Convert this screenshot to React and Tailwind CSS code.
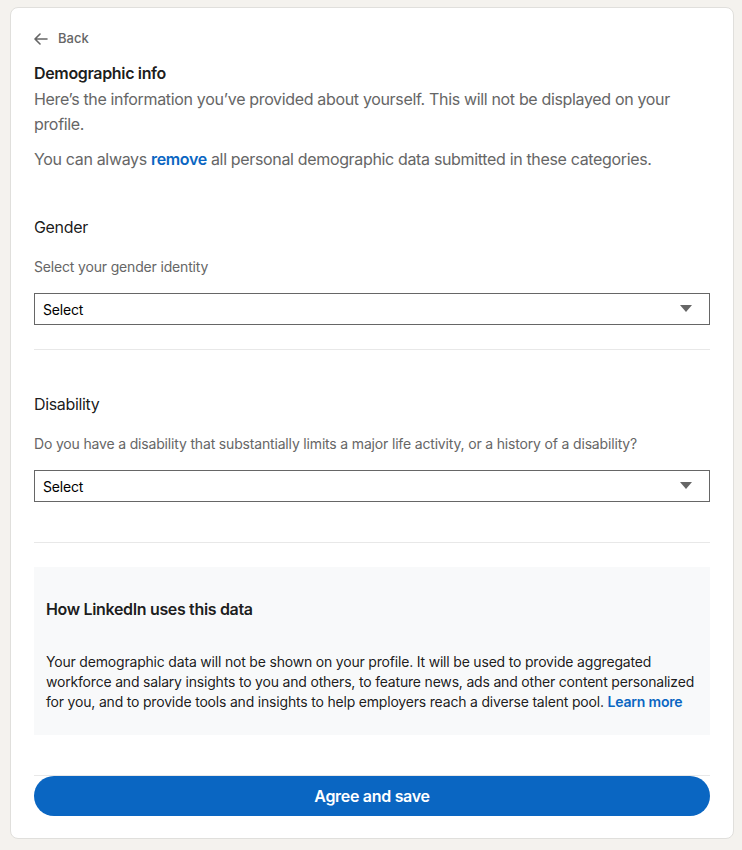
import React from "react";

const Caret = () => (
  <svg width="12" height="8" viewBox="0 0 12 8" className="shrink-0">
    <path d="M0 0 L12 0 L6 7 Z" fill="#666666" />
  </svg>
);

function SelectBox() {
  return (
    <div className="flex h-8 items-center justify-between border border-[#666666] pl-[8px] pr-[17px] text-[14px] tracking-[-0.17px] text-black">
      <span>Select</span>
      <Caret />
    </div>
  );
}

export default function App() {
  return (
    <div
      className="min-h-[850px] bg-[#f4f2ee] pl-[10px] pr-[8px] pt-[7px] pb-[10px]"
      style={{ fontFamily: "Inter, 'Noto Sans', sans-serif" }}
    >
      <div className="rounded-lg border border-[#e0dfdc] bg-white px-[23px] pt-[23px] pb-[22px]">
        <div className="flex h-[16px] items-center gap-[10px] text-[13px] font-medium text-[#666666]">
          <svg width="14" height="12" viewBox="0 0 14 12" fill="none" stroke="#666" strokeWidth="1.6" strokeLinecap="round" strokeLinejoin="round">
            <path d="M13 6H1.5M6 1L1 6l5 5" />
          </svg>
          <span>Back</span>
        </div>
        <h1 className="mt-[16px] text-[16px] font-semibold leading-[20px] tracking-[-0.34px] text-black/90">Demographic info</h1>
        <p className="mt-[4px] text-[16px] leading-[25px] tracking-[-0.34px] text-[#666666]">
          Here’s the information you’ve provided about yourself. This will not be displayed on your profile.
        </p>
        <p className="mt-[10px] text-[16px] leading-[24px] tracking-[-0.34px] text-[#666666]">
          You can always <span className="font-semibold text-[#0a66c2]">remove</span> all personal demographic data submitted in these categories.
        </p>

        <div className="mt-[44px] text-[16px] leading-[24px] tracking-[-0.34px] text-black/90">Gender</div>
        <div className="mt-[18px] text-[14px] leading-[20px] tracking-[-0.17px] text-[#666666]">Select your gender identity</div>
        <div className="mt-[16px]">
          <SelectBox />
        </div>
        <div className="mt-[24px] h-px bg-[#e8e8e8]" />

        <div className="mt-[42px] text-[16px] leading-[24px] tracking-[-0.34px] text-black/90">Disability</div>
        <div className="mt-[18px] text-[14px] leading-[20px] tracking-[-0.17px] text-[#666666]">
          Do you have a disability that substantially limits a major life activity, or a history of a disability?
        </div>
        <div className="mt-[16px]">
          <SelectBox />
        </div>
        <div className="mt-[40px] h-px bg-[#e8e8e8]" />

        <div className="mt-[24px] bg-[#f8f9fa] px-[12px] pt-[30px] pb-[23px]">
          <h2 className="text-[16px] font-semibold leading-[24px] tracking-[-0.34px] text-black/90">How LinkedIn uses this data</h2>
          <p className="mt-[31px] text-[14px] leading-[20px] tracking-[-0.19px] text-black/90">
            Your demographic data will not be shown on your profile. It will be used to provide aggregated workforce and salary insights to you and others, to feature news, ads and other content personalized for you, and to provide tools and insights to help employers reach a diverse talent pool.{" "}
            <span className="font-semibold text-[#0a66c2]">Learn more</span>
          </p>
        </div>

        <div className="mt-[40px] h-px bg-[#e8e8e8]" />
        <button className="flex h-[40px] w-full items-center justify-center rounded-full bg-[#0a66c2] text-[16px] font-semibold tracking-[-0.3px] text-white">
          Agree and save
        </button>
      </div>
    </div>
  );
}
